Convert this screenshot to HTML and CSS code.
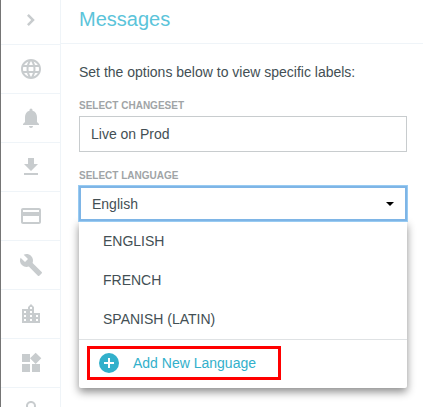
FILE: index.html
```html
<!DOCTYPE html>
<html lang="en">

<head>
    <meta charset="UTF-8">
    <meta name="viewport" content="width=device-width, initial-scale=1.0">
    <title>Messages</title>
    <link rel="stylesheet" href="styles.css">
</head>

<body>
    <!-- Sidebar -->
    <nav class="sidebar">
        <a href="#" class="toggle" aria-label="Expand menu">
            <svg viewBox="0 0 24 24"><path d="M8 16.2L12.2 12 8 7.8 9.8 6l6 6-6 6z"/></svg>
        </a>
        <a href="#" aria-label="Sites">
            <svg viewBox="0 0 24 24"><path d="M11.99 2C6.47 2 2 6.48 2 12s4.47 10 9.99 10C17.52 22 22 17.52 22 12S17.52 2 11.99 2zm6.93 6h-2.95a15.65 15.65 0 0 0-1.38-3.56A8.03 8.03 0 0 1 18.92 8zM12 4.04c.83 1.2 1.48 2.53 1.91 3.96h-3.82c.43-1.43 1.08-2.76 1.91-3.96zM4.26 14C4.1 13.36 4 12.69 4 12s.1-1.36.26-2h3.38a16.5 16.5 0 0 0 0 4H4.26zm.82 2h2.95c.32 1.25.78 2.45 1.38 3.56A7.99 7.99 0 0 1 5.08 16zm2.95-8H5.08a7.99 7.99 0 0 1 4.33-3.56A15.65 15.65 0 0 0 8.03 8zM12 19.96c-.83-1.2-1.48-2.53-1.91-3.96h3.82c-.43 1.43-1.08 2.76-1.91 3.96zM14.34 14H9.66a14.7 14.7 0 0 1 0-4h4.68a14.7 14.7 0 0 1 0 4zm.25 5.56c.6-1.11 1.06-2.31 1.38-3.56h2.95a8.03 8.03 0 0 1-4.33 3.56zM16.36 14a16.5 16.5 0 0 0 0-4h3.38c.16.64.26 1.31.26 2s-.1 1.36-.26 2h-3.38z"/></svg>
        </a>
        <a href="#" aria-label="Notifications">
            <svg viewBox="0 0 24 24"><path d="M12 22c1.1 0 2-.9 2-2h-4c0 1.1.9 2 2 2zm6-6v-5c0-3.07-1.63-5.64-4.5-6.32V4a1.5 1.5 0 0 0-3 0v.68C7.64 5.36 6 7.92 6 11v5l-2 2v1h16v-1l-2-2z"/></svg>
        </a>
        <a href="#" aria-label="Downloads">
            <svg viewBox="0 0 24 24"><path d="M19 9h-4V3H9v6H5l7 7 7-7zM5 18v2h14v-2H5z"/></svg>
        </a>
        <a href="#" aria-label="Payments">
            <svg viewBox="0 0 24 24"><path d="M20 4H4c-1.11 0-2 .89-2 2v12c0 1.11.89 2 2 2h16c1.11 0 2-.89 2-2V6c0-1.11-.89-2-2-2zm0 14H4v-6h16v6zm0-10H4V6h16v2z"/></svg>
        </a>
        <a href="#" aria-label="Tools">
            <svg viewBox="0 0 24 24"><path d="M22.7 19l-9.1-9.1c.9-2.3.4-5-1.5-6.9-2-2-5-2.4-7.4-1.3L9 6 6 9 1.6 4.7C.4 7.1.9 10.1 2.9 12.1c1.9 1.9 4.6 2.4 6.9 1.5l9.1 9.1c.4.4 1 .4 1.4 0l2.3-2.3c.5-.4.5-1.1.1-1.4z"/></svg>
        </a>
        <a href="#" aria-label="Properties">
            <svg viewBox="0 0 24 24"><path d="M15 11V5l-3-3-3 3v2H3v14h18V11h-6zm-8 8H5v-2h2v2zm0-4H5v-2h2v2zm0-4H5V9h2v2zm6 8h-2v-2h2v2zm0-4h-2v-2h2v2zm0-4h-2V9h2v2zm0-4h-2V5h2v2zm6 12h-2v-2h2v2zm0-4h-2v-2h2v2z"/></svg>
        </a>
        <a href="#" aria-label="Widgets">
            <svg viewBox="0 0 24 24"><path d="M13 13v8h8v-8h-8zM3 21h8v-8H3v8zM3 3v8h8V3H3zm13.66-1.31L11 7.34 16.66 13l5.66-5.66-5.66-5.65z"/></svg>
        </a>
        <a href="#" aria-label="Account">
            <svg viewBox="0 0 24 24"><path d="M12 3a3 3 0 1 1 0 6 3 3 0 0 1 0-6m0 10.900c2.970 0 6.100 1.460 6.100 2.100v1.100H5.900V16c0-.64 3.130-2.100 6.100-2.100M12 1C9.200 1 7 3.200 7 6s2.200 5 5 5 5-2.200 5-5-2.200-5-5-5zm0 11c-2.670 0-8 1.340-8 4v3h16v-3c0-2.660-5.330-4-8-4z"/></svg>
        </a>
    </nav>

    <main>
        <header>
            <h1>Messages</h1>
        </header>

        <form class="options">
            <p>Set the options below to view specific labels:</p>

            <div class="field">
                <label for="changeset">SELECT CHANGESET</label>
                <input type="text" id="changeset" value="Live on Prod">
            </div>

            <div class="field">
                <label for="language">SELECT LANGUAGE</label>
                <div class="dropdown">
                    <select id="language">
                        <option>English</option>
                        <option>French</option>
                        <option>Spanish (Latin)</option>
                    </select>
                    <svg class="caret" viewBox="0 0 8 4"><path d="M0 0h8L4 4z"/></svg>

                    <!-- Open menu -->
                    <div class="menu">
                        <ul>
                            <li><button type="button">ENGLISH</button></li>
                            <li><button type="button">FRENCH</button></li>
                            <li><button type="button">SPANISH (LATIN)</button></li>
                        </ul>
                        <div class="menu-footer">
                            <button type="button" class="add-btn">
                                <svg viewBox="0 0 20 20"><circle cx="10" cy="10" r="10"/><path d="M10 5v10M5 10h10"/></svg>
                                Add New Language
                            </button>
                        </div>
                    </div>
                </div>
            </div>
        </form>
    </main>
</body>

</html>
```
FILE: styles.css
```css
* {
    box-sizing: border-box;
    margin: 0;
    padding: 0;
}

body {
    display: flex;
    height: 100vh;
    overflow: hidden;
    border-left: 1px solid #757575;
    background-color: #fff;
    color: #434f54;
    font-family: "Liberation Sans", Arial, sans-serif;
    font-size: 14px;
}

input,
select,
button {
    font: inherit;
    color: inherit;
}

/* Sidebar */
.sidebar {
    flex: 0 0 60px;
    overflow: hidden;
    border-right: 1px solid #eff4f8;
}

.sidebar a {
    display: flex;
    align-items: center;
    justify-content: center;
    height: 49px;
    border-bottom: 1px solid #eff4f8;
}

.sidebar svg {
    width: 24px;
    height: 24px;
    fill: #c8ccce;
}

.sidebar .toggle {
    height: 45px;
    padding-bottom: 4px;
}

/* Main content */
main {
    flex: 1;
}

header {
    height: 44px;
    padding: 8px 18px;
    border-bottom: 1px solid #eff4f8;
}

h1 {
    color: #5bc4da;
    font-size: 20px;
    font-weight: normal;
    line-height: 22px;
}

.options {
    padding: 18px 16px 0 18px;
}

.options p {
    margin-bottom: 17px;
    line-height: 20px;
}

.field {
    margin-bottom: 17px;
}

.field label {
    display: block;
    height: 17px;
    color: #a0a4a6;
    font-size: 10px;
    font-weight: bold;
    line-height: 14px;
}

.field input,
.field select {
    display: block;
    width: 100%;
    height: 36px;
    padding: 0 11px;
    border: 1px solid #c8ccce;
    background-color: #fff;
    outline: none;
}

/* Language dropdown */
.dropdown {
    position: relative;
}

.field select {
    position: relative;
    z-index: 1;
    appearance: none;
    height: 35px;
    border: 2px solid #7eb5e6;
    box-shadow: 0 0 0 1px #98cbf2;
}

.caret {
    position: absolute;
    z-index: 2;
    top: 16px;
    right: 13px;
    width: 8px;
    height: 4px;
    fill: #000;
    pointer-events: none;
}

.menu {
    position: absolute;
    top: 100%;
    left: 0;
    right: 0;
    border-radius: 0 0 2px 2px;
    background-color: #fff;
    box-shadow: 0 4px 8px rgba(0, 0, 0, 0.45);
}

.menu ul {
    padding-bottom: 1px;
    list-style: none;
}

.menu button {
    border: none;
    background: none;
    text-align: left;
    cursor: pointer;
}

.menu li button {
    display: block;
    width: 100%;
    height: 39px;
    padding: 0 24px;
}

.menu li button:hover {
    background-color: #eff4f8;
}

.menu-footer {
    padding: 6px 8px 8px;
    border-top: 1px solid #dfe2e4;
}

.menu .add-btn {
    display: flex;
    align-items: center;
    gap: 14px;
    width: 194px;
    height: 34px;
    padding: 0 9px;
    border: 3px solid #f00;
    color: #32b0cb;
}

.add-btn svg {
    width: 20px;
    height: 20px;
    fill: #32b0cb;
    stroke: #fff;
}

.add-btn circle {
    stroke: none;
}

.add-btn path {
    stroke-width: 2;
}
```
